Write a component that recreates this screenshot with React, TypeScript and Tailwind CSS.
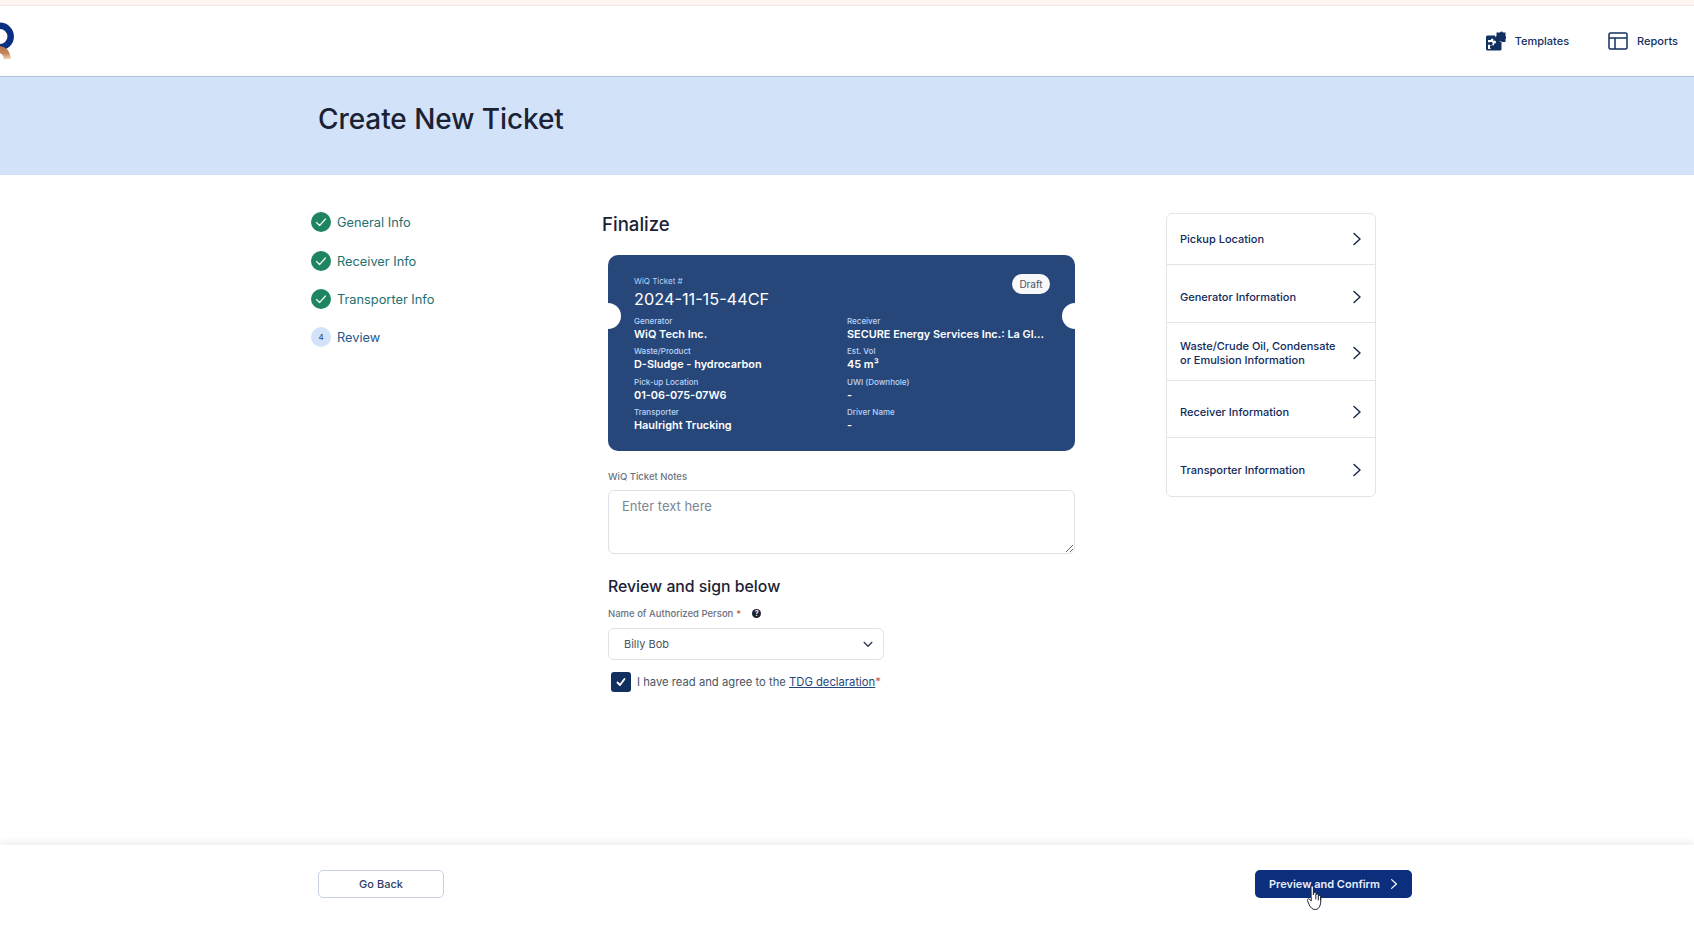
import React from "react";

const font = { fontFamily: "Inter, 'Liberation Sans', sans-serif" };

function Chevron({ className = "" }: { className?: string }) {
  return (
    <svg viewBox="0 0 10 14" className={className} fill="none" stroke="currentColor" strokeWidth="1.5" strokeLinecap="round" strokeLinejoin="round">
      <path d="M2 1.500 8 7l-6 5.500" />
    </svg>
  );
}

function Step({ label, h }: { label: string; h: string }) {
  return (
    <div className={`flex items-center gap-[6px] ${h}`}>
      <span className="flex h-5 w-5 items-center justify-center rounded-full bg-[#1e8560]">
        <svg viewBox="0 0 20 20" className="h-5 w-5" fill="none" stroke="#e8f5ef" strokeWidth="1.300" strokeLinecap="round" strokeLinejoin="round">
          <path d="M5.500 10.500 8.600 13.500 14.500 7" />
        </svg>
      </span>
      <span className="pt-[2px] text-[12.800px] leading-5 text-[#22706f]">{label}</span>
    </div>
  );
}

function Field({ label, value, h }: { label: string; value: string; h: string }) {
  return (
    <div className={`min-w-0 ${h}`}>
      <div className="text-[8px] font-medium leading-[12px] text-[#bcd4f5]">{label}</div>
      <div className="-mt-px whitespace-nowrap text-[10.900px] font-semibold leading-[16px] text-white">{value}</div>
    </div>
  );
}

function Row({ label, h, last }: { label: React.ReactNode; h: string; last?: boolean }) {
  return (
    <div className={`flex items-center justify-between pl-[13px] pr-[13px] ${h} ${last ? "" : "border-b border-[#e2e4ec]"}`}>
      <span className="text-[11px] font-medium leading-[14px] text-[#0f2a5c]">{label}</span>
      <Chevron className="h-[14px] w-[10px] text-[#1b2b4d]" />
    </div>
  );
}

export default function App() {
  return (
    <div style={font} className="relative flex h-[925px] w-full flex-col overflow-hidden bg-white">
      <div className="h-[6px] shrink-0 border-b border-[#f3e2e2] bg-[#fdf6f2]" />

      <header className="flex h-[71px] shrink-0 items-center justify-between border-b border-[#b4c2d6] bg-white pr-[16px]">
        <svg viewBox="0 20 14 40" className="mb-auto mt-[14px] h-10 w-[14px]" fill="none">
          <defs>
            <linearGradient id="tan" gradientUnits="userSpaceOnUse" x1="0" y1="46" x2="0" y2="60">
              <stop offset="0" stopColor="#b8704a" />
              <stop offset="0.55" stopColor="#c58a60" />
              <stop offset="1" stopColor="#f5e3c5" />
            </linearGradient>
          </defs>
          <circle cx="0" cy="36.500" r="10.700" stroke="#0b2f80" strokeWidth="6.500" />
          <path d="M-2 49.500c5 0 8.500 3 9.500 9.500" stroke="url(#tan)" strokeWidth="7" />
        </svg>
        <nav className="flex items-center gap-[39px]">
          <div className="flex items-center gap-[9px]">
            <svg viewBox="0 0 20 20" className="h-5 w-5">
              <path d="M1.500 4.500H9a2 2 0 0 0 4 0V10.500h2.500V18a1.500 1.500 0 0 1-1.500 1.500H1.500A1.500 1.500 0 0 1 0 18V6a1.500 1.500 0 0 1 1.500-1.500Z" fill="#12305f" />
              <path d="M2 18v-4.300h1.800a1.700 1.700 0 1 0 0-2.400H2V9h3V7.800h2.300V10a1.600 1.600 0 1 1 1.800 2.600H8v1.600H6.600a1.600 1.600 0 1 0-1.400 3.800Z" fill="#fff" />
              <path d="M10.500 1.500H14a1.700 1.700 0 0 1 3 0h2.500V5a1.700 1.700 0 0 1 0 3v3H16a1.700 1.700 0 0 0-3 0h-1.500V8a1.700 1.700 0 0 1-1-3Z" fill="#12305f" />
            </svg>
            <span className="text-[11px] font-medium text-[#12305f]">Templates</span>
          </div>
          <div className="flex items-center gap-[9px]">
            <svg viewBox="0 0 20 20" className="h-5 w-5" fill="none" stroke="#12305f" strokeWidth="1.500">
              <rect x="1" y="2" width="18" height="16" rx="1.500" />
              <path d="M1 7h18M7 7v11" />
            </svg>
            <span className="text-[11px] font-medium text-[#12305f]">Reports</span>
          </div>
        </nav>
      </header>

      <section className="h-[98px] shrink-0 bg-[#d2e2f9] pl-[318px] pt-[23px]">
        <h1 className="text-[28px] font-medium leading-[38px] tracking-[-0.07px] text-[#1b2236]">Create New Ticket</h1>
      </section>

      <main className="flex flex-1 pl-[311px]">
        <aside className="w-[291px] shrink-0 pt-[37px]">
          <Step label="General Info" h="h-[20px] mb-[19px]" />
          <Step label="Receiver Info" h="h-[20px] mb-[18px]" />
          <Step label="Transporter Info" h="h-[20px] mb-[18px]" />
          <div className="flex h-[20px] items-center gap-[6px]">
            <span className="flex h-5 w-5 items-center justify-center rounded-full bg-[#d2e2f9] text-[8px] text-[#27477a]">4</span>
            <span className="pt-[2px] text-[12.800px] leading-5 text-[#27568f]">Review</span>
          </div>
        </aside>

        <div className="w-[564px] shrink-0 pt-[36px]">
          <h2 className="text-[18.600px] font-medium leading-[26px] text-[#1b2236]">Finalize</h2>
          <div className="ml-[6px] w-[467px]">
            <div className="relative mt-[18px] h-[196px] overflow-hidden rounded-[10px] bg-[#27477a] pl-[26px] pr-[24px] pt-[20px]">
              <span className="absolute left-[-13px] top-[48px] h-[26px] w-[26px] rounded-full bg-white" />
              <span className="absolute right-[-13px] top-[48px] h-[26px] w-[26px] rounded-full bg-white" />
              <span className="absolute right-[25px] top-[19px] flex h-5 w-[38px] items-center justify-center rounded-full bg-[#f7f8fa] text-[10px] text-[#4b5563]">Draft</span>
              <div className="text-[8px] font-normal leading-[12px] text-[#bcd4f5]">WiQ Ticket #</div>
              <div className="mb-[5px] mt-[1px] text-[16.300px] font-normal leading-[22px] text-white">2024-11-15-44CF</div>
              <div className="grid grid-cols-[213px_1fr]">
                <Field h="h-[30px]" label="Generator" value="WiQ Tech Inc." />
                <Field h="h-[30px]" label="Receiver" value="SECURE Energy Services Inc.: La Gl..." />
                <Field h="h-[31px]" label="Waste/Product" value="D-Sludge - hydrocarbon" />
                <Field h="h-[31px]" label="Est. Vol" value="45 m³" />
                <Field h="h-[30px]" label="Pick-up Location" value="01-06-075-07W6" />
                <Field h="h-[30px]" label="UWI (Downhole)" value="-" />
                <Field h="h-[30px]" label="Transporter" value="Haulright Trucking" />
                <Field h="h-[30px]" label="Driver Name" value="-" />
              </div>
            </div>

            <label className="mt-[19px] block text-[9.500px] font-medium leading-[14px] text-[#6b7280]">WiQ Ticket Notes</label>
            <textarea
              readOnly
              placeholder="Enter text here"
              className="mt-[6px] block h-[64px] w-full rounded-[6px] border border-[#dfe1e8] bg-white px-[13px] py-[6px] text-[13px] leading-[18px] outline-none placeholder:text-[#7b8794]"
            />

            <h3 className="mt-[22px] text-[15.800px] font-medium leading-[22px] text-[#1b2236]">Review and sign below</h3>
            <div className="mt-[9px] flex h-[14px] items-center">
              <span className="text-[9.500px] font-medium text-[#6b7280]">Name of Authorized Person</span>
              <span className="ml-[3px] text-[9.500px] font-medium text-[#c0623a]">*</span>
              <span className="ml-[11px] mb-[2px] flex h-[9px] w-[9px] items-center justify-center rounded-full bg-[#1b2236] text-[7px] font-bold leading-none text-white">?</span>
            </div>
            <div className="mt-[7px] flex h-[32px] w-[276px] items-center justify-between rounded-[6px] border border-[#dfe1e8] pl-[15px] pr-[10px]">
              <span className="text-[11px] text-[#4b5563]">Billy Bob</span>
              <svg viewBox="0 0 12 8" className="h-[7px] w-[10px]" fill="none" stroke="#374151" strokeWidth="1.800" strokeLinecap="round" strokeLinejoin="round">
                <path d="M1.500 1.500 6 6l4.500-4.500" />
              </svg>
            </div>
            <div className="ml-[3px] mt-[12px] flex h-5 items-center gap-[6px]">
              <span className="flex h-5 w-5 items-center justify-center rounded-[3px] bg-[#12305f]">
                <svg viewBox="0 0 20 20" className="h-5 w-5" fill="none" stroke="#fff" strokeWidth="1.800" strokeLinecap="round" strokeLinejoin="round">
                  <path d="M6.500 10.500 9 13l4.500-6" />
                </svg>
              </span>
              <span className="text-[11.250px] text-[#4b5563]">
                I have read and agree to the <span className="text-[#27477a] underline">TDG declaration</span>
                <span className="text-[#c0623a]">*</span>
              </span>
            </div>
          </div>
        </div>

        <aside className="mt-[38px] h-[284px] w-[210px] shrink-0 overflow-hidden rounded-[6px] border border-[#e2e4ec]">
          <Row label="Pickup Location" h="h-[51px]" />
          <Row label="Generator Information" h="h-[58px] pt-[6px]" />
          <Row label={<>Waste/Crude Oil, Condensate<br />or Emulsion Information</>} h="h-[58px] pt-[3px]" />
          <Row label="Receiver Information" h="h-[57px] pt-[5px]" />
          <Row label="Transporter Information" h="h-[58px] pt-[5px]" last />
        </aside>
      </main>

      <footer className="flex h-[80px] shrink-0 items-start justify-between bg-white pl-[318px] pr-[282px] pt-[25px] shadow-[0_-4px_6px_rgba(0,0,0,0.06)]">
        <button className="h-[28px] w-[126px] rounded-[5px] border border-[#c9d1e3] text-[11px] font-medium text-[#2f3f63]">Go Back</button>
        <button className="flex h-[28px] w-[157px] items-center justify-center gap-[10px] rounded-[5px] bg-[#0b2f7c] text-[11px] font-semibold text-[#e8eefb]">
          Preview and Confirm
          <Chevron className="h-[12px] w-[8px] text-white" />
        </button>
      </footer>

      <svg viewBox="0 0 18 26" className="absolute left-[1307px] top-[885px] h-[26px] w-[18px]" fill="#fff" stroke="#1f2937" strokeWidth="1" strokeLinejoin="round" strokeLinecap="round">
        <path d="M4 2.200c0-1.600 2.400-1.600 2.400 0V10l.3-2c.3-1.300 2.300-1.100 2.300.3l.1 1.500c.2-1.300 2.200-1.200 2.300.2l.1 1.200c.3-1.100 2.100-1 2.200.4.200 3 .3 6-.5 8.400-.8 2.800-2.400 4.500-5 4.500-3 0-4.600-2-6-4.600L.4 15.500c-.6-1.300 1-2.500 2.200-1.300L4 15.700Z" />
        <path d="M8.800 10v4M11.300 11v4M13.500 12v3" fill="none" />
      </svg>
    </div>
  );
}
